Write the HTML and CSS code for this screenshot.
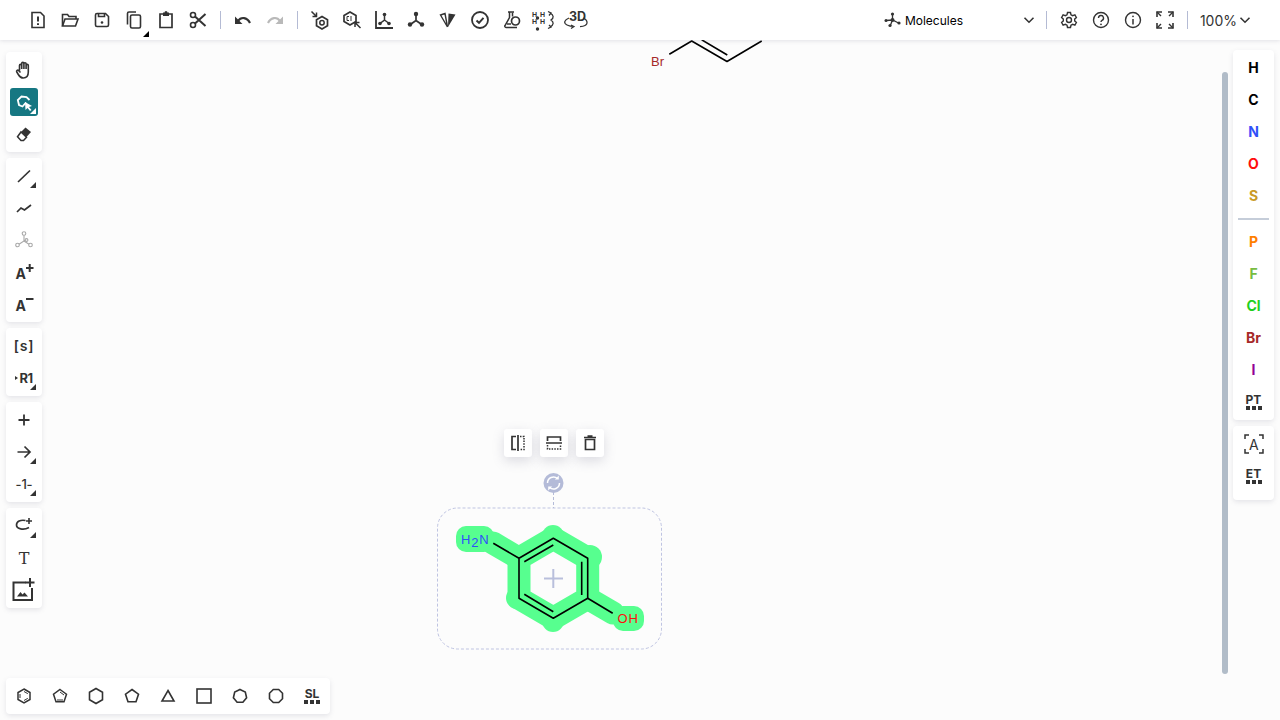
FILE: index.html
```html
<!DOCTYPE html>
<html lang="en">
<head>
<meta charset="utf-8">
<title>Ketcher</title>
<link rel="stylesheet" href="styles.css">
</head>
<body>
<div class="app">
  <header class="topbar">
    <div class="tb-group">
      <button class="tb"><svg class="ic" viewBox="0 0 20 20"><path d="M4 2.500h8.500l3.500 3.500v11.500H4z" stroke-width="1.600"/><path d="M10 6.500v5M10 13.300v1.700" stroke-width="2"/></svg></button>
      <button class="tb"><svg class="ic" viewBox="0 0 20 20"><path d="M2.500 16V4.500h5l1.500 2h7V9"/><path d="M2.500 16l2.500-7h13l-2.500 7z"/></svg></button>
      <button class="tb"><svg class="ic" viewBox="0 0 20 20"><path d="M3.500 5a1.500 1.500 0 0 1 1.500-1.500h8.500l3 3V15a1.500 1.500 0 0 1-1.500 1.500H5A1.500 1.500 0 0 1 3.500 15z" stroke-width="1.600"/><path d="M6.500 3.500v3h6v-3" stroke-width="1.600"/><circle class="f" cx="10" cy="12.500" r="1.300"/></svg></button>
      <button class="tb more dark"><svg class="ic" viewBox="0 0 20 20"><path d="M3.500 14.500V3.500a1.500 1.500 0 0 1 1.500-1.500h7"/><rect x="6.500" y="5" width="10" height="13" rx="1.500"/></svg></button>
      <button class="tb"><svg class="ic" viewBox="0 0 20 20"><path d="M7 4H4v13.500h12V4h-3" stroke-width="1.700"/><path d="M7 2.500h1.500a1.500 1.500 0 0 1 3 0H13V6H7z" class="f"/></svg></button>
      <button class="tb"><svg class="ic" viewBox="0 0 20 20"><circle cx="5" cy="5" r="2.500"/><circle cx="5" cy="15" r="2.500"/><path d="M7 6.500L17.500 16M7 13.500L17.500 4" stroke-width="2"/></svg></button>
    </div>
    <span class="sep"></span>
    <div class="tb-group">
      <button class="tb"><svg class="ic" viewBox="0 0 20 20"><path d="M5 11C8 6.500 14 7 17 13" stroke-width="2.200"/><path d="M2 6.500V14h7.500z" class="f"/></svg></button>
      <button class="tb off"><svg class="ic" viewBox="0 0 20 20"><path d="M15 11C12 6.500 6 7 3 13" stroke-width="2.200"/><path d="M18 6.500V14h-7.500z" class="f"/></svg></button>
    </div>
    <span class="sep"></span>
    <div class="tb-group">
      <button class="tb"><svg class="ic" viewBox="0 0 20 20"><path d="M12 6.500l5.500 3.200v6l-5.500 3.200-5.500-3.200v-6z" stroke-width="1.700"/><circle cx="12" cy="12.700" r="2.200" stroke-width="1.500"/><path d="M1.500 1.500l5 5M6.500 2.500v4h-4" stroke-width="1.500"/></svg></button>
      <button class="tb"><svg class="ic" viewBox="0 0 20 20"><path d="M8 2l6 3.500v6l-6 3.500-6-3.500v-6z" stroke-width="1.700"/><path d="M7 6.500h-2v4h2M9 6v5" stroke-width="1"/><path d="M18.500 18l-5.500-5.500M13 17v-4.500h4.500" stroke-width="1.500"/></svg></button>
      <button class="tb"><svg class="ic" viewBox="0 0 20 20"><path d="M2 1v17h17" stroke-width="1.800"/><path d="M10.500 5.500v4.500l-4 3M10.500 10l4 3" stroke-width="1.500"/><circle class="f" cx="10.500" cy="4.500" r="1.800"/><circle class="f" cx="6" cy="13.500" r="1.800"/><circle class="f" cx="15" cy="13.500" r="1.800"/></svg></button>
      <button class="tb"><svg class="ic" viewBox="0 0 20 20"><path d="M10 4v6.500l-5 3.500M10 10.500l5 3.500" stroke-width="1.700"/><circle class="f" cx="10" cy="4" r="2.200"/><circle class="f" cx="4" cy="14.500" r="2.200"/><circle class="f" cx="16" cy="14.500" r="2.200"/></svg></button>
      <button class="tb"><svg class="ic" viewBox="0 0 20 20"><path d="M2.500 5l4.500-1.500L9.500 17z" stroke-width="1.400"/><path class="f" d="M10.500 3.500l7 1L10 17z"/></svg></button>
      <button class="tb"><svg class="ic" viewBox="0 0 20 20"><circle cx="10" cy="10" r="8" stroke-width="1.800"/><path d="M6.500 10.500l2.500 2.300 4.500-5" stroke-width="2"/></svg></button>
      <button class="tb"><svg class="ic" viewBox="0 0 20 20"><path d="M6 2h6M7.500 2.500v5L3 15.500A1.300 1.300 0 0 0 4 17.500h11" stroke-width="1.500"/><path d="M10.500 2.500v4" stroke-width="1.500"/><circle cx="13.500" cy="11" r="4" stroke-width="1.700"/><path d="M5 14h4" stroke-width="1.500"/></svg></button>
      <button class="tb wide"><svg class="ic" viewBox="0 0 26 20"><text class="tiny" x="1" y="6.500">H</text><text class="tiny" x="9" y="6.500">H</text><text class="tiny" x="1" y="14">H</text><text class="tiny" x="9" y="14">H</text><circle class="f" cx="6.500" cy="8" r="1.700"/><circle class="f" cx="6.500" cy="19" r="1.700"/><path d="M19 3c4 2 4 5 1 7 3 2 3 5-1 7M17 1.500l3 1.500-2 2.500M17 18.500l3-1.500-2-2" stroke-width="1.300"/></svg></button>
      <button class="tb wide"><svg class="ic" viewBox="0 0 26 20"><text class="label3d" x="6" y="11">3D</text><path d="M6 8C1.500 10 0 13 4 15c2 1 4 1.500 7 1.500M20 8c5 2 5 6 2 7.500-1.500.8-3 1-5 1.200M8 15l3 1.500-3 2" stroke-width="1.200"/></svg></button>
    </div>
    <div class="tb-right">
      <div class="mode">
        <svg class="ic-mode" viewBox="0 0 18 18"><path d="M8.500 3v6M2 9.500l6.500-.5 6 3M8.500 9l-2 5" stroke-width="1.300"/><circle class="f" cx="8.500" cy="3" r="1.600"/><circle class="f" cx="8.500" cy="9" r="2"/><circle class="f" cx="2" cy="9.500" r="1.500"/><circle class="f" cx="15" cy="12" r="1.600"/><circle class="f" cx="6" cy="14.500" r="1.600"/></svg>
        <span class="mode-label">Molecules</span>
        <svg class="chev" viewBox="0 0 12 12"><path d="M1.500 3.800L6 8.200l4.500-4.400"/></svg>
      </div>
      <span class="sep"></span>
      <button class="tb"><svg class="ic" viewBox="0 0 20 20"><path d="M8.500 2.500h3l.5 2.300 1.700.9 2.200-.8 1.500 2.600-1.700 1.600v1.800l1.700 1.600-1.500 2.600-2.200-.8-1.700.9-.5 2.300h-3L8 15.200l-1.700-.9-2.200.8-1.500-2.600 1.700-1.600V9.100L2.600 7.500l1.500-2.600 2.200.8L8 4.800z" stroke-width="1.400"/><circle cx="10" cy="10" r="2.500" stroke-width="1.400"/></svg></button>
      <button class="tb"><svg class="ic" viewBox="0 0 20 20"><circle cx="10" cy="10" r="7.500" stroke-width="1.400"/><path d="M7.500 8a2.500 2.500 0 1 1 3.500 2.300c-.8.400-1 .9-1 1.700" stroke-width="1.400"/><circle class="f" cx="10" cy="14.300" r=".9"/></svg></button>
      <button class="tb"><svg class="ic" viewBox="0 0 20 20"><circle cx="10" cy="10" r="7.500" stroke-width="1.400"/><path d="M10 9v5.500" stroke-width="1.500"/><circle class="f" cx="10" cy="6.300" r=".9"/></svg></button>
      <button class="tb"><svg class="ic" viewBox="0 0 20 20"><path d="M2 7V2h5M18 7V2h-5M2 13v5h5M18 13v5h-5" stroke-width="1.600"/><path d="M2 2l4 4M18 2l-4 4M2 18l4-4M18 18l-4-4" stroke-width="1.400"/></svg></button>
      <span class="sep sep-zoom"></span>
      <div class="zoom-box"><span class="zoom-val">100%</span><svg class="chev chev-zoom" viewBox="0 0 12 12"><path d="M1.500 3.800L6 8.200l4.500-4.400"/></svg></div>
    </div>
  </header>

  <main class="workspace">
    <svg class="canvas" viewBox="0 0 1280 680">
      <g transform="translate(0,-40)">
        <g class="bonds">
          <path d="M669.300 54.300L691.700 41l35.300 20.500L761.700 41M701.700 39.800L727.300 55"/>
        </g>
        <text class="atom br" x="651" y="66">Br</text>

        <rect class="sel-box" x="437.500" y="508" width="224" height="141" rx="20"/>
        <path class="stem" d="M553.500 492v16"/>
        <circle class="rot" cx="553.500" cy="483" r="10"/>
        <path class="rot-arrows" d="M547.500 483a6 6 0 0 1 10-4.500M559.500 483a6 6 0 0 1-10 4.500"/>
        <path class="rot-heads" d="M558.800 475.500v4h-4zM548.200 490.500v-4h4z"/>

        <g class="hl">
          <path d="M519 558.300L553.300 538.300 587.700 558.300V598.300L553.300 618.300 519 598.300Z"/>
          <path d="M493 543L519 558.300M587.700 598.300L613 613"/>
        </g>
        <g class="hl-fill">
          <circle cx="553" cy="536" r="11"/>
          <circle cx="590" cy="557" r="12"/>
          <circle cx="517" cy="598" r="11"/>
          <circle cx="553" cy="621" r="11"/>
          <rect x="456" y="526" width="38" height="26" rx="10"/>
          <rect x="613" y="606" width="31" height="25" rx="10"/>
        </g>
        <path class="center-plus" d="M553.300 569v19M544 578.500h19"/>
        <g class="bonds">
          <path d="M519 558.300L553.300 538.300 587.700 558.300V598.300L553.300 618.300 519 598.300Z"/>
          <path d="M524.300 561.700L553.300 545M581.700 561.700V595M524.300 594.300L553.300 611.700"/>
          <path d="M493.300 543.300L519 558.300M587.700 598.300L612.700 613.300"/>
        </g>
        <text class="atom n" x="461" y="543.500">H<tspan class="sub" dy="3">2</tspan><tspan dy="-3">N</tspan></text>
        <text class="atom o" x="617.500" y="623">OH</text>
      </g>
    </svg>

    <div class="float-tools">
      <button class="btn"><svg class="ic" viewBox="0 0 20 20"><path d="M8 3.500H4v13h4M10 2v16" stroke-width="1.700"/><path d="M12 3.500h4v13h-4" stroke-width="1.500" stroke-dasharray="1.500 1.200"/></svg></button>
      <button class="btn"><svg class="ic" viewBox="0 0 20 20"><path d="M3.500 8V4h13v4M2 10h16" stroke-width="1.700"/><path d="M3.500 12v4h13v-4" stroke-width="1.500" stroke-dasharray="1.500 1.200"/></svg></button>
      <button class="btn"><svg class="ic" viewBox="0 0 20 20"><path d="M5.500 6.500h9v10h-9z" stroke-width="1.700"/><path d="M4 4.500h12M7.500 3h5" stroke-width="1.700"/></svg></button>
    </div>

    <div class="scroll-thumb"></div>

    <div class="rows">
      <div class="side-row">
        <aside class="left">
          <div class="panel">
            <button class="btn"><svg class="ic" viewBox="0 0 20 20"><path d="M5.500 10.500V5.500a1.100 1.100 0 0 1 2.200 0V9M7.700 9V3.500a1.100 1.100 0 0 1 2.200 0V9M9.900 9V3.800a1.100 1.100 0 0 1 2.200 0V9M12.100 9V5.500a1.100 1.100 0 0 1 2.200 0v6.500c0 3.500-1.700 6-5 6-2.500 0-3.500-1-5-3.500L2.800 12c-.8-1.400.8-2.500 2-1.300l1.700 1.800" stroke-width="1.600"/></svg></button>
            <button class="btn active more light"><svg class="ic" viewBox="0 0 20 20"><path d="M12 10.500L8.500 14.500 5 13 3.800 8 7.500 4.500 12.500 5 15.500 8" stroke-width="1.800"/><path class="f" d="M11 10l7 4-3 1 2.500 3-1.500 1-2.500-3-2 2z"/></svg></button>
            <button class="btn"><svg class="ic" viewBox="0 0 20 20"><path class="f" d="M11.500 3.500l5.500 4.500-4.500 5-5.500-5z"/><path d="M7 8l5.500 5.200-3 3.300H7L3.500 12.800z" stroke-width="1.500"/></svg></button>
          </div>
          <div class="panel">
            <button class="btn more dark"><svg class="ic" viewBox="0 0 20 20"><path d="M4 16L16 4.500" stroke-width="1.700"/></svg></button>
            <button class="btn"><svg class="ic" viewBox="0 0 20 20"><path d="M3 14l4-4 3.500 2L17 7" stroke-width="1.700"/></svg></button>
            <button class="btn off"><svg class="ic" viewBox="0 0 20 20"><circle cx="10" cy="3.500" r="1.800" stroke-width="1.100"/><circle cx="3.500" cy="15" r="1.800" stroke-width="1.100"/><circle cx="16.500" cy="15" r="1.800" stroke-width="1.100"/><circle cx="12.500" cy="10" r="1.400" stroke-width="1.100"/><path d="M10 5.300V11L5 14.200M10 11l5 3.200M10 11l1.500-.5" stroke-width="1.100"/></svg></button>
            <button class="btn"><svg class="ic" viewBox="0 0 20 20"><text class="big-a" x="1.500" y="17">A</text><path d="M12 6h7.500M15.700 2v8" stroke-width="2"/></svg></button>
            <button class="btn"><svg class="ic" viewBox="0 0 20 20"><text class="big-a" x="1.500" y="17">A</text><path d="M12 5h7.500" stroke-width="2"/></svg></button>
          </div>
          <div class="panel">
            <button class="btn"><span class="t-s">[s]</span></button>
            <button class="btn more dark"><span class="t-r"><i class="tri"></i>R1</span></button>
          </div>
          <div class="panel">
            <button class="btn"><svg class="ic" viewBox="0 0 20 20"><path d="M10 4.500v11M4.500 10h11" stroke-width="1.800"/></svg></button>
            <button class="btn more dark"><svg class="ic" viewBox="0 0 20 20"><path d="M3.500 10h12.500M10.500 4.500L16 10l-5.500 5.500" stroke-width="1.700"/></svg></button>
            <button class="btn more dark"><span class="t-map">-1-</span></button>
          </div>
          <div class="panel">
            <button class="btn more dark"><svg class="ic" viewBox="0 0 20 20"><path d="M11.500 4.500C6.500 3.500 2.500 5.500 2.500 9c0 4 7 5.500 12.500 2.500" stroke-width="1.700"/><path d="M15 2v6M12 5h6" stroke-width="1.600"/></svg></button>
            <button class="btn"><span class="t-t">T</span></button>
            <button class="btn"><svg class="ic ic-img" viewBox="0 0 24 24"><path d="M14 4.500H1.500V22H20V10" stroke-width="2"/><path d="M18 0v9M13.500 4.500h9" stroke-width="2"/><path class="f" d="M5 18.500l3.500-4.500 2 2.500 2-2 3.500 4z"/></svg></button>
          </div>
        </aside>
        <aside class="right">
          <div class="panel panel-r">
            <button class="btn el c-h">H</button>
            <button class="btn el c-c">C</button>
            <button class="btn el c-n">N</button>
            <button class="btn el c-o">O</button>
            <button class="btn el c-s">S</button>
            <span class="rule"></span>
            <button class="btn el c-p">P</button>
            <button class="btn el c-f">F</button>
            <button class="btn el c-cl">Cl</button>
            <button class="btn el c-br">Br</button>
            <button class="btn el c-i">I</button>
            <button class="btn"><span class="tbl">PT<i class="dots"></i></span></button>
          </div>
          <div class="panel panel-r panel-ext">
            <button class="btn"><svg class="ic ic-a" viewBox="0 0 20 20"><path d="M1 5V1h4M15 1h4v4M1 15v4h4M19 15v4h-4" stroke-width="1.500"/><text class="thin-a" x="5" y="15.500">A</text></svg></button>
            <button class="btn"><span class="tbl">ET<i class="dots"></i></span></button>
          </div>
        </aside>
      </div>
      <nav class="bottom">
        <button class="btn"><svg class="ic" viewBox="0 0 20 20"><path d="M10 3l6 3.500v7L10 17l-6-3.500v-7z" stroke-width="1.500"/><path d="M10 5.500l3.800 2.200M13.800 12.300L10 14.500M6 8v4" stroke-width="1"/></svg></button>
        <button class="btn"><svg class="ic" viewBox="0 0 20 20"><path d="M10 3.500l6.500 4.700-2.500 7.500H6L3.500 8.200z" stroke-width="1.500"/><path d="M10 6l4 3M7 14h6" stroke-width="1"/></svg></button>
        <button class="btn"><svg class="ic" viewBox="0 0 20 20"><path d="M10 2.500l6.500 3.800v7.400L10 17.500l-6.500-3.800V6.300z" stroke-width="1.600"/></svg></button>
        <button class="btn"><svg class="ic" viewBox="0 0 20 20"><path d="M10 3.500l6.500 4.700-2.500 7.500H6L3.500 8.200z" stroke-width="1.600"/></svg></button>
        <button class="btn"><svg class="ic" viewBox="0 0 20 20"><path d="M10 4.500l6 10.500H4z" stroke-width="1.600"/></svg></button>
        <button class="btn"><svg class="ic" viewBox="0 0 20 20"><rect x="3" y="3" width="14" height="14" stroke-width="1.600"/></svg></button>
        <button class="btn"><svg class="ic" viewBox="0 0 20 20"><path d="M10 3.500l5.300 2.500 1.300 5.700-3.700 4.500H7.100l-3.700-4.500L4.700 6z" stroke-width="1.600"/></svg></button>
        <button class="btn"><svg class="ic" viewBox="0 0 20 20"><path d="M7.300 3.500h5.400l3.800 3.800v5.400l-3.800 3.800H7.300l-3.800-3.800V7.300z" stroke-width="1.600"/></svg></button>
        <button class="btn"><span class="tbl">SL<i class="dots"></i></span></button>
      </nav>
    </div>
  </main>
</div>
</body>
</html>
```

FILE: styles.css
```css
* { box-sizing: border-box; }
html, body { margin: 0; height: 100%; overflow: hidden; }
body { font-family: Inter, "Liberation Sans", sans-serif; color: #333; background: #fcfcfc; }
button { border: 0; background: none; padding: 0; margin: 0; font: inherit; color: inherit; display: flex; align-items: center; justify-content: center; position: relative; }

.app { width: 1280px; height: 720px; display: flex; flex-direction: column; }

/* shared icon drawing */
svg { stroke-width: 1.600; }
svg path, svg circle, svg rect { fill: none; stroke: currentColor; }
svg .f { fill: currentColor; stroke: none; }
.ic { width: 20px; height: 20px; display: block; overflow: visible; }
.ic-img { width: 24px; height: 24px; }

.topbar { height: 40px; flex: none; background: #fff; display: flex; align-items: center; padding-left: 22px; box-shadow: 0 1px 4px rgba(103,104,132,.18); position: relative; z-index: 3; }
.tb-group { display: flex; align-items: center; }
.tb { width: 32px; height: 32px; color: #333; }
.tb.off { color: #b9b9b9; }
.tb.wide .ic { width: 26px; }
.sep { width: 1px; height: 18px; background: #b4bbd4; margin: 0 6px; flex: none; }
.tb-right { margin-left: auto; display: flex; align-items: center; padding-right: 29px; }
.mode { width: 155px; display: flex; align-items: center; padding-left: 4px; margin-right: 5px; }
.ic-mode { width: 18px; height: 18px; color: #333; overflow: visible; }
.mode-label { font-size: 12px; color: #000; margin-left: 3px; flex: 1; }
.chev { width: 12px; height: 12px; color: #333; }
.sep-zoom { margin: 0 12px 0 6px; }
.zoom-box { display: flex; align-items: center; gap: 2px; }
.zoom-val { font-size: 14px; color: #333; }

.tiny { font: 700 7px "Liberation Sans", sans-serif; fill: #333; }
.label3d { font: 700 12.500px Inter, sans-serif; fill: #333; }
.big-a { font: 700 14px Inter, sans-serif; fill: #333; }
.thin-a { font: 400 14px Inter, sans-serif; fill: #333; }

.workspace { flex: 1; position: relative; min-height: 0; }
.canvas { position: absolute; left: 0; top: 0; width: 1280px; height: 680px; }
.bonds path { stroke: #000; stroke-width: 1.600; fill: none; stroke-linejoin: round; }
.hl path { stroke: #57ff8f; stroke-width: 23px; stroke-linejoin: round; stroke-linecap: round; fill: none; }
.hl-fill circle, .hl-fill rect { fill: #57ff8f; stroke: none; }
.atom { font: 400 13px "Liberation Sans", sans-serif; letter-spacing: .8px; }
.atom.br { fill: #a62929; letter-spacing: 0; }
.atom.n { fill: #3050f8; }
.atom.o { fill: #ff0d0d; }
.sel-box { fill: none; stroke: #bfc4e2; stroke-width: 1; stroke-dasharray: 3 2; }
.stem { stroke: #b4bbd8; stroke-width: 1; stroke-dasharray: 3 2; }
.rot { fill: #b4bbd8; stroke: none; }
.rot-arrows { stroke: #fff; stroke-width: 1.500; fill: none; }
.rot-heads { fill: #fff; stroke: none; }
.center-plus { stroke: #b9bfdc; stroke-width: 2; }

.float-tools { position: absolute; left: 504px; top: 389px; display: flex; gap: 8px; }
.float-tools .btn { background: #fff; box-shadow: 0 4px 12px rgba(103,104,132,.22); }

.scroll-thumb { position: absolute; left: 1222px; top: 32px; width: 6px; height: 602px; border-radius: 3px; background: #b1bcc8; }

.rows { position: absolute; inset: 0; display: flex; flex-direction: column; justify-content: space-between; padding: 10px 6px 6px; pointer-events: none; }
.side-row { display: flex; justify-content: space-between; align-items: flex-start; }
.left, .right { display: flex; flex-direction: column; gap: 6px; }
.left { margin-top: 2px; }
.panel { width: 36px; padding: 4px; background: #fff; border-radius: 4px; display: flex; flex-direction: column; gap: 4px; box-shadow: 0 2px 5px rgba(103,104,132,.16); }
.panel-r { width: 41px; align-items: center; }
.panel-ext { padding-bottom: 10px; }
.btn { width: 28px; height: 28px; border-radius: 3px; color: #333; flex: none; }
.btn.off { color: #a8a8a8; }
.btn.active { background: #167782; color: #fff; }
.more::after { content: ""; position: absolute; right: 2px; bottom: 2px; width: 0; height: 0; border-style: solid; border-width: 0 0 6px 6px; border-color: transparent transparent #333 transparent; }
.tb.more::after { right: 1px; bottom: -1px; border-bottom-color: #000; }
.more.light::after { border-bottom-color: #fff; }

.el { font-size: 14px; font-weight: 700; padding-bottom: 2px; }
.c-h, .c-c { color: #000; }
.c-n { color: #3050f8; }
.c-o { color: #ff0d0d; }
.c-s { color: #c99a26; }
.c-p { color: #ff8000; }
.c-f { color: #78bc42; }
.c-cl { color: #1fd01f; }
.c-br { color: #a62929; }
.c-i { color: #940094; }
.rule { width: 31px; height: 2px; background: #c5cdd9; margin: 4px 0; flex: none; }

.tbl { display: flex; flex-direction: column; align-items: center; font-size: 12px; font-weight: 700; line-height: 10px; color: #333; }
.dots { display: block; width: 16px; height: 4px; margin-top: 1px; background: linear-gradient(90deg, #333 4px, transparent 4px, transparent 6px, #333 6px, #333 10px, transparent 10px, transparent 12px, #333 12px); }
.t-s { font: 600 14px Inter, sans-serif; letter-spacing: .8px; padding-bottom: 2px; }
.t-r { display: flex; align-items: center; font-size: 13px; font-weight: 700; letter-spacing: -.5px; }
.tri { width: 0; height: 0; border-style: solid; border-width: 2.500px 0 2.500px 3px; border-color: transparent transparent transparent #333; margin-right: 1px; }
.t-map { font-size: 13px; font-weight: 500; letter-spacing: -.2px; }
.t-t { font: 400 16px "DejaVu Serif", serif; }

.bottom { display: flex; gap: 8px; padding: 4px; width: 324px; background: #fff; border-radius: 4px; box-shadow: 0 2px 5px rgba(103,104,132,.16); }
```
